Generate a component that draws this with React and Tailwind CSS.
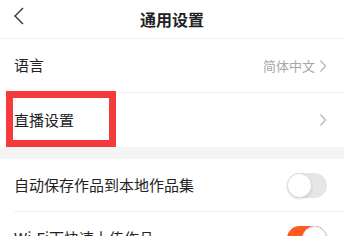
import React from 'react';

const font = { fontFamily: '"Noto Sans CJK SC", "Noto Sans", sans-serif' };

function Chevron() {
  return (
    <svg width="8" height="14" viewBox="0 0 8 14" fill="none" className="ml-1">
      <path d="M1.5 1.5 L6.5 7 L1.5 12.5" stroke="#b5b5b5" strokeWidth="1.2" />
    </svg>
  );
}

function Toggle({ on }) {
  return (
    <div
      className={
        'w-[40px] h-[25px] rounded-full relative ' +
        (on ? 'bg-[#ff5a1f]' : 'bg-[#e6e6e6]')
      }
    >
      <div
        className={
          'absolute top-0 w-[25px] h-[25px] rounded-full bg-white border border-[#dcdcdc] shadow-sm ' +
          (on ? 'right-0' : 'left-0')
        }
      />
    </div>
  );
}

export default function App() {
  return (
    <div className="w-[344px] h-[236px] overflow-hidden bg-white relative text-[#222]" style={font}>
      {/* en-tête */}
      <div className="h-[39px] relative flex items-center justify-center border-b border-[#f0f0f0]">
        <svg width="12" height="18" viewBox="0 0 12 18" fill="none" className="absolute left-[13px] top-[7px]">
          <path d="M10 1 L2 9 L10 17" stroke="#333" strokeWidth="1.4" />
        </svg>
        <span className="text-[16px] font-bold leading-none">通用设置</span>
      </div>

      <div className="pl-[14px]">
        <div className="h-[54px] flex items-center justify-between pr-[17px] border-b border-[#f0f0f0]">
          <span className="text-[15px]">语言</span>
          <span className="flex items-center text-[13px] text-[#a6a6a6]">
            简体中文
            <Chevron />
          </span>
        </div>
        <div className="h-[54px] flex items-center justify-between pr-[17px]">
          <span className="text-[15px]">直播设置</span>
          <Chevron />
        </div>
      </div>

      <div className="h-[12px] bg-[#f4f4f4]" />

      <div className="pl-[14px]">
        <div className="h-[53px] flex items-center justify-between pr-[17px] border-b border-[#f0f0f0]">
          <span className="text-[15px]">自动保存作品到本地作品集</span>
          <Toggle on={false} />
        </div>
        <div className="h-[53px] flex items-center justify-between pr-[17px]">
          <span className="text-[15px]">Wi-Fi下快速上传作品</span>
          <Toggle on={true} />
        </div>
      </div>

      {/* cadre d'annotation rouge */}
      <div className="absolute left-[6px] top-[91px] w-[110px] h-[56px] border-[7px] border-[#f43a3a]" />
    </div>
  );
}
